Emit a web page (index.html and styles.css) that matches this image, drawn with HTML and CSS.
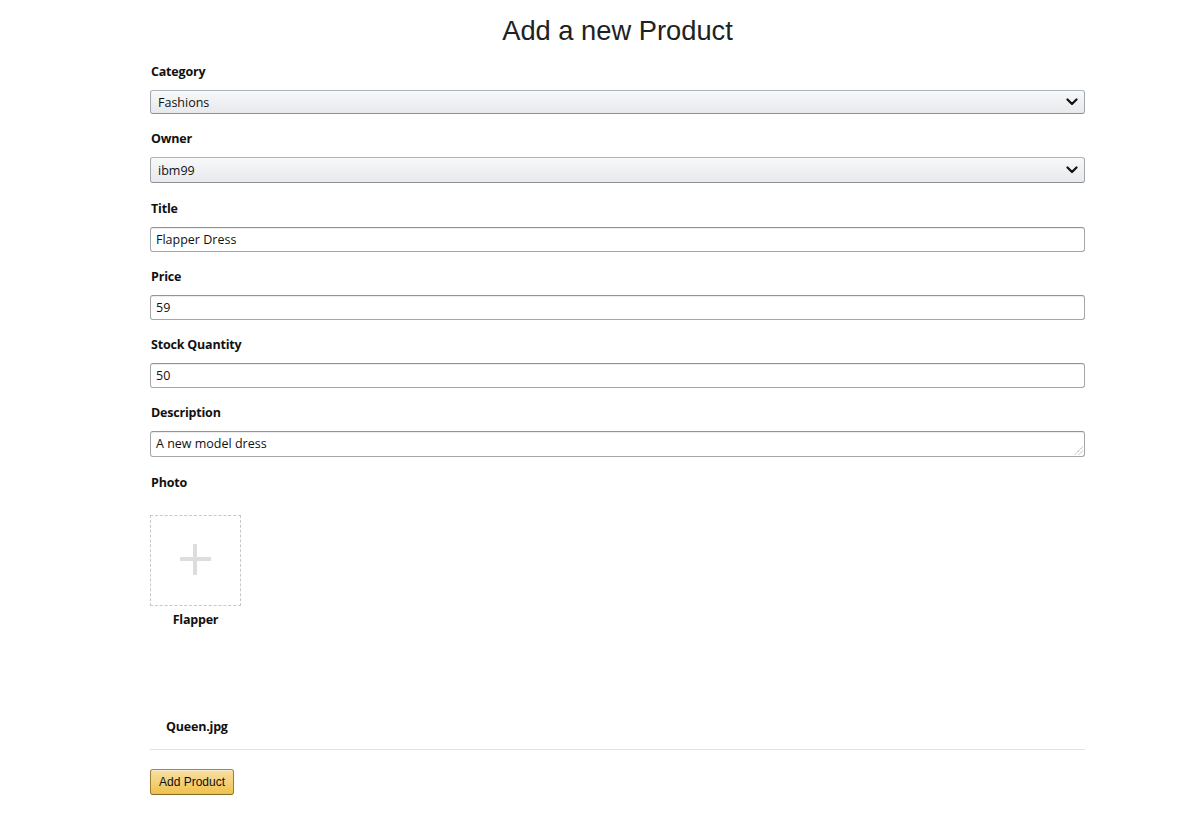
FILE: index.html
```html
<!DOCTYPE html>
<html>
<head>
<meta charset="utf-8">
<link rel="stylesheet" href="styles.css">
<title>Add a new Product</title>
</head>
<body>
<div class="page">
  <h1 class="heading">Add a new Product</h1>
  <form class="form">
    <div class="group">
      <label class="label">Category</label>
      <div class="select">
        <span>Fashions</span>
        <svg class="chev" width="12" height="8" viewBox="0 0 12 8"><path d="M1.5 1.5 L6 6 L10.5 1.5" fill="none" stroke="#111" stroke-width="2.2" stroke-linecap="round" stroke-linejoin="round"/></svg>
      </div>
    </div>
    <div class="group">
      <label class="label">Owner</label>
      <div class="select tall">
        <span>ibm99</span>
        <svg class="chev" width="12" height="8" viewBox="0 0 12 8"><path d="M1.5 1.5 L6 6 L10.5 1.5" fill="none" stroke="#111" stroke-width="2.2" stroke-linecap="round" stroke-linejoin="round"/></svg>
      </div>
    </div>
    <div class="group">
      <label class="label">Title</label>
      <div class="input">Flapper Dress</div>
    </div>
    <div class="group">
      <label class="label">Price</label>
      <div class="input">59</div>
    </div>
    <div class="group">
      <label class="label">Stock Quantity</label>
      <div class="input">50</div>
    </div>
    <div class="group">
      <label class="label">Description</label>
      <div class="input textarea">A new model dress
        <svg class="grip" width="9" height="9" viewBox="0 0 9 9"><path d="M8.5 1 L1 8.5 M8.5 5 L5 8.5" stroke="#777" stroke-width="1" stroke-dasharray="1 1"/></svg>
      </div>
    </div>
    <div class="group photo-group">
      <label class="label">Photo</label>
      <div class="photo">
        <div class="drop">
          <span class="plus-h"></span>
          <span class="plus-v"></span>
        </div>
        <div class="photo-name">Flapper</div>
      </div>
    </div>
    <div class="file">Queen.jpg</div>
    <div class="rule"></div>
    <button type="button" class="btn">Add Product</button>
  </form>
</div>
</body>
</html>
```
FILE: styles.css
```css
html, body {
  margin: 0;
  padding: 0;
  background: #fff;
}
body {
  font-family: "Open Sans", "Noto Sans", sans-serif;
  color: #111;
}
.page {
  width: 935px;
  margin: 0 0 0 150px;
}
.heading {
  margin: 0;
  padding-top: 14px;
  font-family: "Liberation Sans", Arial, sans-serif;
  font-weight: 400;
  font-size: 27.3px;
  line-height: 34px;
  text-align: center;
  color: #222;
  box-sizing: border-box;
  height: 63px;
}
.form {
  display: flex;
  flex-direction: column;
}
.group {
  display: flex;
  flex-direction: column;
  margin-bottom: 16.3px;
}
.label {
  font-size: 12.5px;
  font-weight: 700;
  line-height: 18px;
  height: 18px;
  margin-bottom: 9px;
  padding-left: 1px;
  color: #111;
  letter-spacing: -0.2px;
}
.select {
  height: 24px;
  box-sizing: border-box;
  border: 1px solid #a2a6ac;
  border-color: #adb1b8 #a2a6ac #8d9096;
  border-radius: 3px;
  background: linear-gradient(#f7f8fa, #e7e9ec);
  display: flex;
  align-items: center;
  justify-content: space-between;
  padding: 0 6px 0 7px;
  font-size: 12.5px;
  box-shadow: 0 1px 0 rgba(255,255,255,.6) inset;
}
.select.tall {
  height: 26px;
}
.chev {
  display: block;
}
.input {
  height: 25px;
  box-sizing: border-box;
  border: 1px solid #a6a6a6;
  border-top-color: #949494;
  border-radius: 3px;
  padding: 0 6px 0 5px;
  font-size: 12.5px;
  line-height: 23px;
  box-shadow: 0 1px 0 rgba(255,255,255,.5), 0 1px 0 rgba(0,0,0,.07) inset;
}
.textarea {
  position: relative;
  height: 26px;
}
.grip {
  position: absolute;
  right: 1px;
  bottom: 1px;
}
.photo-group .label {
  margin-bottom: 23px;
}
.photo {
  display: flex;
  flex-direction: column;
  width: 91px;
  align-items: center;
}
.drop {
  width: 91px;
  height: 91px;
  box-sizing: border-box;
  border: 1px dashed #c8c8c8;
  position: relative;
}
.plus-h {
  position: absolute;
  left: 29px;
  top: 41px;
  width: 31px;
  height: 4px;
  background: #dddddd;
}
.plus-v {
  position: absolute;
  left: 42px;
  top: 28px;
  width: 4px;
  height: 31px;
  background: #dddddd;
}
.photo-name {
  margin-top: 4px;
  font-size: 12.5px;
  font-weight: 700;
  line-height: 20px;
  letter-spacing: -0.2px;
}
.file {
  margin-top: 71px;
  padding-left: 16px;
  font-size: 12.5px;
  font-weight: 700;
  line-height: 20px;
  letter-spacing: -0.2px;
}
.rule {
  margin-top: 12px;
  height: 1px;
  background: #e3e3e3;
}
.btn {
  margin-top: 19px;
  align-self: flex-start;
  width: 84px;
  height: 26px;
  box-sizing: border-box;
  border: 1px solid #a88734;
  border-color: #a88734 #9c7e31 #846a29;
  border-radius: 3px;
  background: linear-gradient(#f7dfa5, #f0c14b);
  font-family: "Liberation Sans", Arial, sans-serif;
  font-size: 12px;
  color: #111;
  padding: 0;
  box-shadow: 0 1px 0 rgba(255,255,255,.4) inset;
}
```
